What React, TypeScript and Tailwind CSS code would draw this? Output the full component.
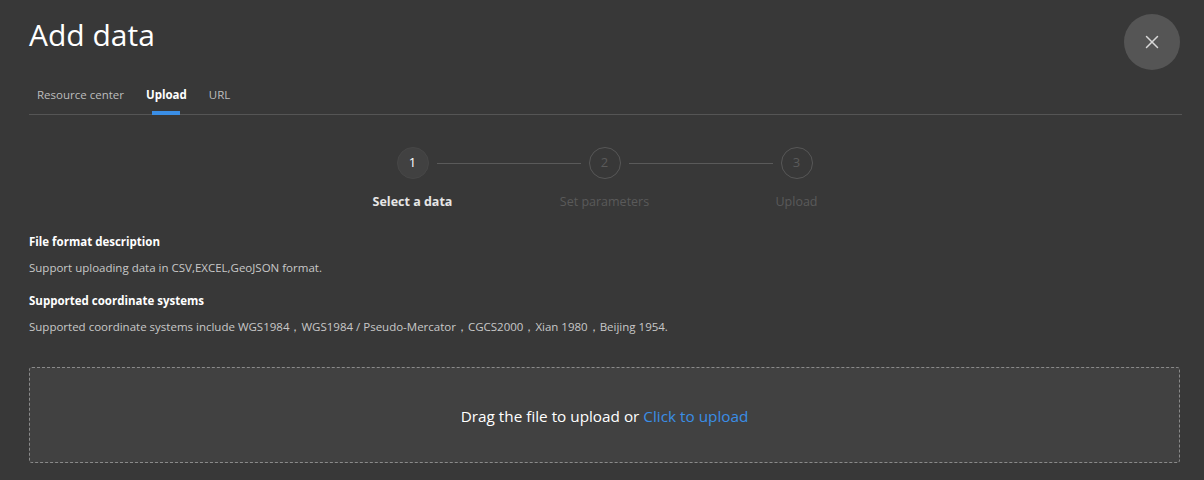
import { X } from "lucide-react";

const STEPS = [
  { num: 1, label: "Select a data", active: true },
  { num: 2, label: "Set parameters", active: false },
  { num: 3, label: "Upload", active: false },
];

const TABS = [
  { label: "Resource center", active: false },
  { label: "Upload", active: true },
  { label: "URL", active: false },
];

export default function App() {
  return (
    <div
      className="h-[480px] w-full overflow-hidden bg-[#383838] pl-[29px] pr-[24px] text-[#d0d0d0]"
      style={{ fontFamily: '"Segoe UI", "Open Sans", "Noto Sans", sans-serif' }}
    >
      {/* header */}
      <div className="flex h-[84px] items-start justify-between">
        <h1 className="mt-[13px] text-[30px] leading-[44px] font-normal text-white">Add data</h1>
        <button className="mt-[14px] flex h-[56px] w-[56px] items-center justify-center rounded-full bg-[#555555] text-[#d8d8d8]">
          <X size={22} strokeWidth={1.6} />
        </button>
      </div>

      {/* tabs */}
      <div className="mr-[-2px] flex h-[31px] items-start gap-[22px] border-b border-[#555555] pl-[8px]">
        {TABS.map((tab) => (
          <div key={tab.label} className="relative flex h-full flex-col items-center">
            <span
              className={
                tab.active
                  ? "text-[11.5px] leading-[22px] font-bold text-white"
                  : "text-[11.5px] leading-[22px] text-[#bdbdbd]"
              }
            >
              {tab.label}
            </span>
            {tab.active && <div className="absolute bottom-[-1px] h-[4px] w-[28px] bg-[#3a8ee6]" />}
          </div>
        ))}
      </div>

      {/* stepper */}
      <div className="mt-[32px] flex justify-center">
        <div className="flex w-[576px] items-start">
          {STEPS.map((step, i) => (
            <div key={step.num} className="flex flex-1 flex-col items-center">
              <div className="relative flex w-full justify-center">
                <div
                  className={
                    step.active
                      ? "flex h-[32px] w-[32px] items-center justify-center rounded-full border border-[#474747] bg-[#414141] text-[13px] text-white"
                      : "flex h-[32px] w-[32px] items-center justify-center rounded-full border border-[#575757] text-[13px] text-[#5a5a5a]"
                  }
                >
                  {step.num}
                </div>
                {i < STEPS.length - 1 && (
                  <div className="absolute left-[calc(50%+24px)] top-[16px] h-px w-[144px] bg-[#5a5a5a]" />
                )}
              </div>
              <div
                className={
                  step.active
                    ? "mt-[14px] text-[12.5px] font-bold text-[#e6e6e6]"
                    : "mt-[14px] text-[12.5px] text-[#5a5a5a]"
                }
              >
                {step.label}
              </div>
            </div>
          ))}
        </div>
      </div>

      {/* description */}
      <div className="mt-[20px] text-[11.5px]">
        <div className="font-bold text-white leading-[20px]">File format description</div>
        <div className="mt-[6px] leading-[20px] text-[#c8c8c8]">Support uploading data in CSV,EXCEL,GeoJSON format.</div>
        <div className="mt-[13px] font-bold leading-[20px] text-white">Supported coordinate systems</div>
        <div className="mt-[6px] leading-[20px] text-[#c8c8c8]">
          Supported coordinate systems include WGS1984，WGS1984 / Pseudo-Mercator，CGCS2000，Xian 1980，Beijing 1954.
        </div>
      </div>

      {/* dropzone */}
      <div className="mt-[30px] flex h-[96px] items-center justify-center rounded-[3px] border border-dashed border-[#8a8a8a] bg-[#414141] pt-[4px]">
        <span className="text-[15.3px] text-white">
          Drag the file to upload or <span className="text-[#3a8ee6]">Click to upload</span>
        </span>
      </div>
    </div>
  );
}
